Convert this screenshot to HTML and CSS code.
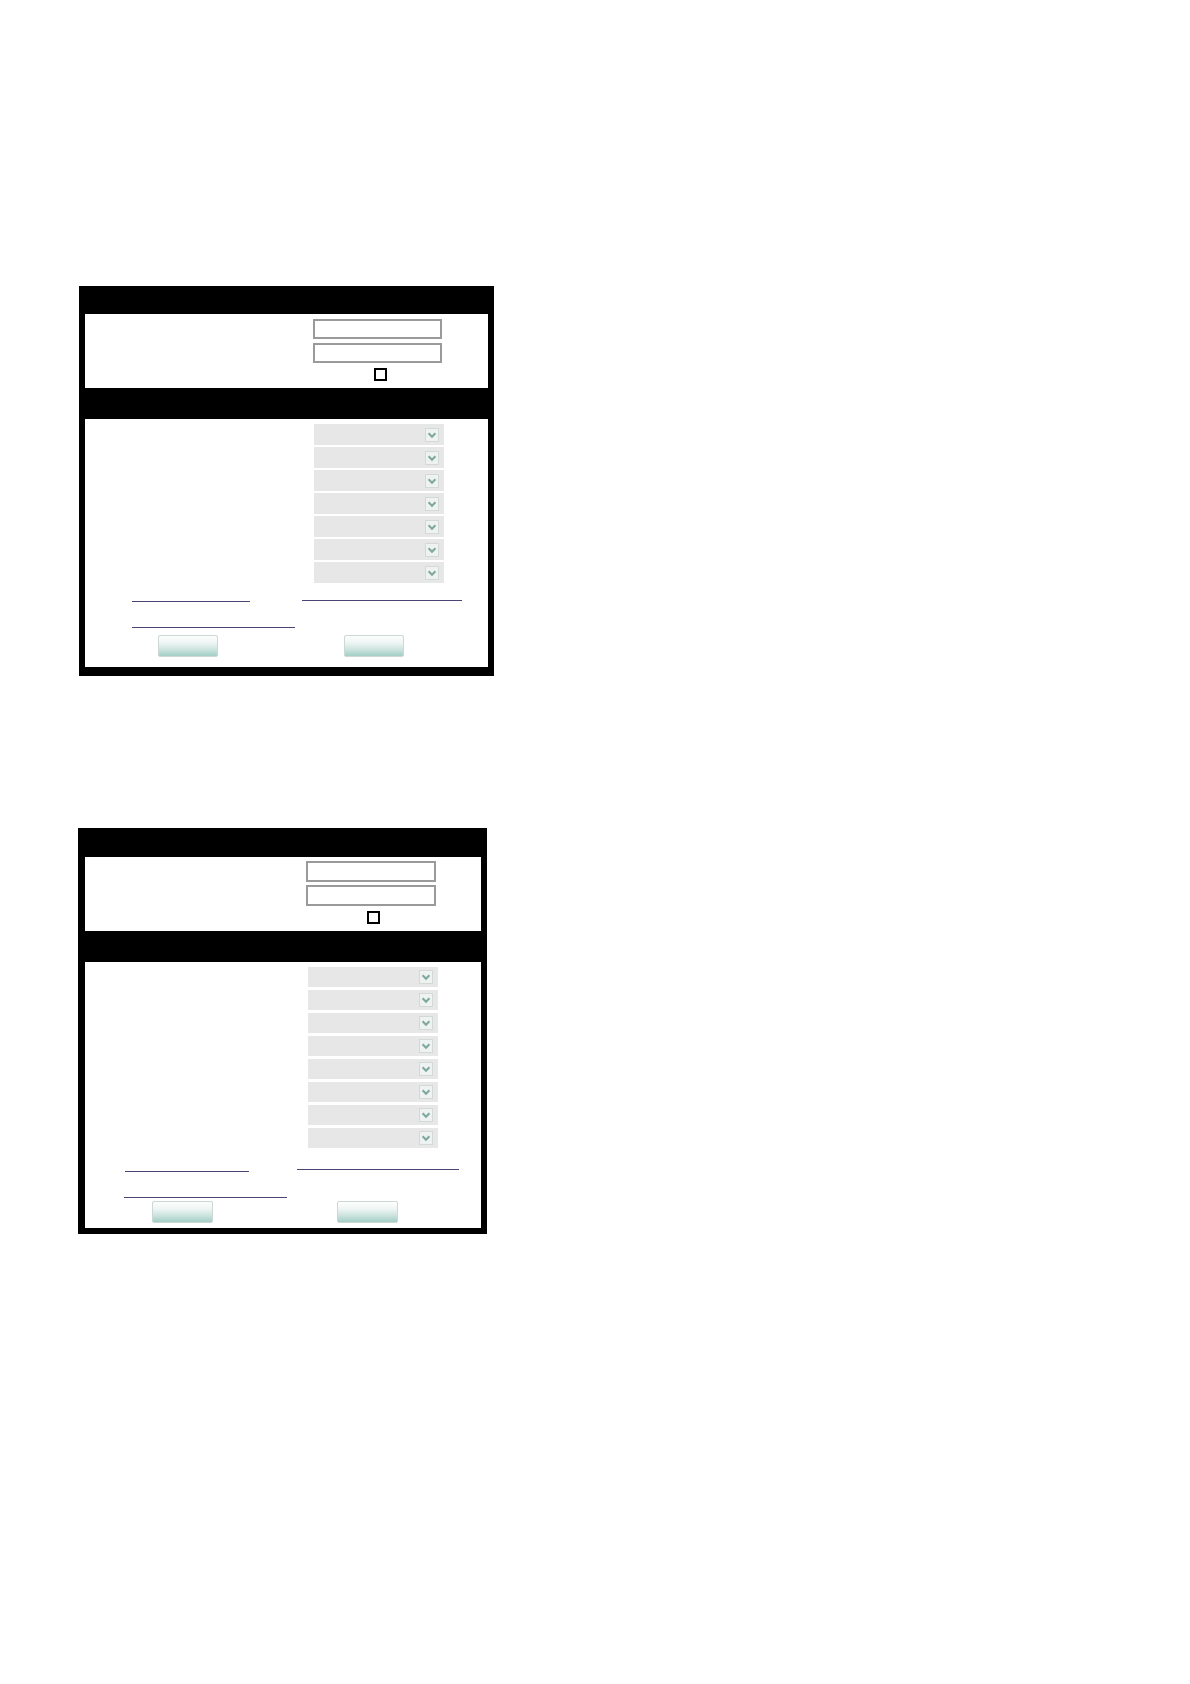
FILE: index.html
```html
<!DOCTYPE html>
<html>
<head>
<meta charset="utf-8">
<title>Form</title>
<link rel="stylesheet" href="styles.css">
</head>
<body>
<div class="page">
  <div class="panel panel-a">
    <div class="band band-top"></div>
    <div class="sec sec-login">
      <div class="fld"></div>
      <div class="fld"></div>
      <div class="chk"></div>
    </div>
    <div class="band band-mid"></div>
    <div class="sec sec-opts">
      <div class="sels">
        <div class="sel"><span class="arr"><svg viewBox="0 0 14 14"><path d="M3 5 L7 9 L11 5"/></svg></span></div>
        <div class="sel"><span class="arr"><svg viewBox="0 0 14 14"><path d="M3 5 L7 9 L11 5"/></svg></span></div>
        <div class="sel"><span class="arr"><svg viewBox="0 0 14 14"><path d="M3 5 L7 9 L11 5"/></svg></span></div>
        <div class="sel"><span class="arr"><svg viewBox="0 0 14 14"><path d="M3 5 L7 9 L11 5"/></svg></span></div>
        <div class="sel"><span class="arr"><svg viewBox="0 0 14 14"><path d="M3 5 L7 9 L11 5"/></svg></span></div>
        <div class="sel"><span class="arr"><svg viewBox="0 0 14 14"><path d="M3 5 L7 9 L11 5"/></svg></span></div>
        <div class="sel"><span class="arr"><svg viewBox="0 0 14 14"><path d="M3 5 L7 9 L11 5"/></svg></span></div>
      </div>
      <div class="links row1">
        <a class="lnk l1"></a>
        <a class="lnk l2"></a>
      </div>
      <div class="links row2">
        <a class="lnk l3"></a>
      </div>
      <div class="btns">
        <span class="btn b1"></span>
        <span class="btn b2"></span>
      </div>
    </div>
  </div>

  <div class="panel panel-b">
    <div class="band band-top"></div>
    <div class="sec sec-login">
      <div class="fld"></div>
      <div class="fld"></div>
      <div class="chk"></div>
    </div>
    <div class="band band-mid"></div>
    <div class="sec sec-opts">
      <div class="sels">
        <div class="sel"><span class="arr"><svg viewBox="0 0 14 14"><path d="M3 5 L7 9 L11 5"/></svg></span></div>
        <div class="sel"><span class="arr"><svg viewBox="0 0 14 14"><path d="M3 5 L7 9 L11 5"/></svg></span></div>
        <div class="sel"><span class="arr"><svg viewBox="0 0 14 14"><path d="M3 5 L7 9 L11 5"/></svg></span></div>
        <div class="sel"><span class="arr"><svg viewBox="0 0 14 14"><path d="M3 5 L7 9 L11 5"/></svg></span></div>
        <div class="sel"><span class="arr"><svg viewBox="0 0 14 14"><path d="M3 5 L7 9 L11 5"/></svg></span></div>
        <div class="sel"><span class="arr"><svg viewBox="0 0 14 14"><path d="M3 5 L7 9 L11 5"/></svg></span></div>
        <div class="sel"><span class="arr"><svg viewBox="0 0 14 14"><path d="M3 5 L7 9 L11 5"/></svg></span></div>
        <div class="sel"><span class="arr"><svg viewBox="0 0 14 14"><path d="M3 5 L7 9 L11 5"/></svg></span></div>
      </div>
      <div class="links row1">
        <a class="lnk l1"></a>
        <a class="lnk l2"></a>
      </div>
      <div class="links row2">
        <a class="lnk l3"></a>
      </div>
      <div class="btns">
        <span class="btn b1"></span>
        <span class="btn b2"></span>
      </div>
    </div>
  </div>
</div>
</body>
</html>
```

FILE: styles.css
```css
html, body {
  margin: 0;
  padding: 0;
  background: #ffffff;
  font-family: "Liberation Sans", Arial, sans-serif;
}

.page {
  padding-top: 286px;
  display: flex;
  flex-direction: column;
}

.panel {
  background: #000000;
  box-sizing: border-box;
  display: flex;
  flex-direction: column;
}

.panel-a {
  margin-left: 79px;
  width: 415px;
  padding: 0 6px 9px 6px;
}

.panel-b {
  margin-left: 78px;
  margin-top: 152px;
  width: 409px;
  padding: 0 6px 6px 7px;
}

.panel-a .band-top { height: 28px; }
.panel-b .band-top { height: 29px; }
.band-mid { height: 31px; }

.sec {
  background: #ffffff;
  display: flex;
  flex-direction: column;
}

.sec-login {
  height: 74px;
  box-sizing: border-box;
}

.fld {
  box-sizing: border-box;
  border: 2px solid #9a9a9a;
  background: #ffffff;
}

.chk {
  box-sizing: border-box;
  width: 13px;
  height: 13px;
  border: 2px solid #000000;
  background: #ffffff;
}

.panel-a .sec-login { padding-top: 5px; }
.panel-a .fld { width: 129px; height: 20px; margin-left: 228px; }
.panel-a .fld + .fld { margin-top: 4px; }
.panel-a .chk { margin-left: 289px; margin-top: 5px; }

.panel-b .sec-login { padding-top: 4px; }
.panel-b .fld { width: 130px; height: 21px; margin-left: 221px; }
.panel-b .fld + .fld { margin-top: 3px; }
.panel-b .chk { margin-left: 282px; margin-top: 5px; }

.sels {
  display: flex;
  flex-direction: column;
  padding-top: 5px;
}

.sel {
  width: 130px;
  background: #e7e7e7;
  display: flex;
  align-items: center;
  justify-content: flex-end;
  padding-right: 5px;
  box-sizing: border-box;
}

.arr {
  width: 14px;
  height: 14px;
  box-sizing: border-box;
  background: #eef2f0;
  border: 1px solid #d2d9d6;
  display: flex;
}

.arr svg {
  width: 12px;
  height: 12px;
}

.arr path {
  fill: none;
  stroke: #7ea79f;
  stroke-width: 2.4;
}

.panel-a .sels { margin-left: 229px; gap: 2px; }
.panel-a .sel { height: 21px; }
.panel-a .sec-opts { height: 248px; }

.panel-b .sels { margin-left: 223px; gap: 3px; }
.panel-b .sel { height: 20px; }
.panel-b .sec-opts { height: 266px; }

.links {
  display: flex;
  align-items: flex-end;
}

.lnk {
  display: block;
  height: 11px;
  border-bottom: 1px solid #4a4474;
}

.panel-a .row1 { margin-top: 6px; }
.panel-a .l1 { margin-left: 47px; width: 118px; }
.panel-a .l2 { margin-left: 52px; width: 160px; margin-bottom: 1px; }
.panel-a .row2 { margin-top: 14px; }
.panel-a .l3 { margin-left: 47px; width: 163px; }
.panel-a .btns { margin-top: 7px; }
.panel-a .b1 { margin-left: 73px; }
.panel-a .b2 { margin-left: 126px; }

.panel-b .row1 { margin-top: 10px; }
.panel-b .l1 { margin-left: 40px; width: 124px; }
.panel-b .l2 { margin-left: 48px; width: 162px; margin-bottom: 2px; }
.panel-b .row2 { margin-top: 14px; }
.panel-b .l3 { margin-left: 39px; width: 163px; }
.panel-b .btns { margin-top: 3px; }
.panel-b .b1 { margin-left: 67px; }
.panel-b .b2 { margin-left: 124px; }

.btns {
  display: flex;
}

.btn {
  display: block;
  width: 60px;
  height: 22px;
  box-sizing: border-box;
  border: 1px solid #cbd8d4;
  border-radius: 2px;
  background: linear-gradient(to bottom, #fdfefe 0%, #eef5f4 35%, #cbe3de 68%, #a3cfc6 100%);
}

.panel-b .btn { width: 61px; }
```
